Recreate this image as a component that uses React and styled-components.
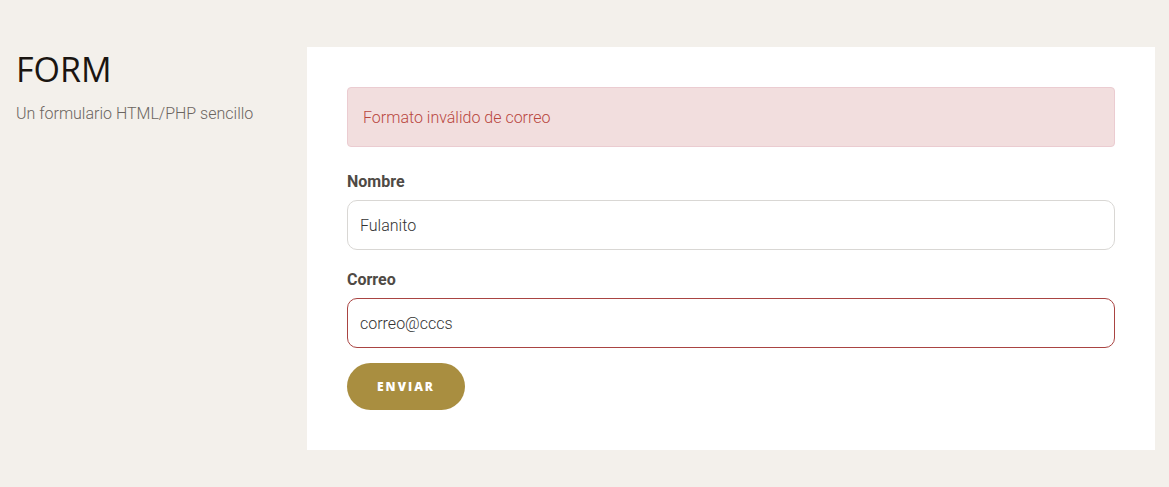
import React from 'react'
import styled, { createGlobalStyle } from 'styled-components'

const GlobalStyle = createGlobalStyle`
  body {
    margin: 0;
    background: #f3f0eb;
    font-family: Roboto, "Liberation Sans", sans-serif;
  }
`

const Page = styled.div`
  display: flex;
  align-items: flex-start;
  padding: 47px 14px 37px 16px;
`

const Intro = styled.div`
  width: 291px;
  flex-shrink: 0;
`

const Title = styled.h1`
  margin: 2px 0 0;
  font-family: "Open Sans", sans-serif;
  font-weight: 400;
  font-size: 34px;
  line-height: 40px;
  color: #1a1511;
`

const Subtitle = styled.p`
  margin: 13px 0 0;
  font-weight: 300;
  font-size: 16px;
  line-height: 24px;
  color: #6b6560;
`

const Card = styled.div`
  flex: 1;
  background: #fff;
  padding: 40px;
`

const Alert = styled.div`
  height: 60px;
  box-sizing: border-box;
  display: flex;
  align-items: center;
  padding: 0 15px;
  background: #f2dede;
  border: 1px solid #ebccd1;
  border-radius: 4px;
  color: #b9473f;
  font-size: 16px;
  font-weight: 300;
`

const Field = styled.div`
  margin-top: ${p => p.first ? '25px' : '20px'};
`

const Label = styled.label`
  display: block;
  font-weight: 700;
  font-size: 16px;
  line-height: 20px;
  color: #4f4a45;
  margin-bottom: 8px;
`

const Input = styled.input`
  display: block;
  width: 100%;
  box-sizing: border-box;
  height: 50px;
  padding: 0 12px;
  border: 1px solid ${p => p.invalid ? '#a94442' : '#d9d7d4'};
  border-radius: 10px;
  font-family: Roboto, sans-serif;
  font-size: 16px;
  font-weight: 300;
  color: #333;
  outline: none;
`

const Button = styled.button`
  display: block;
  margin-top: 15px;
  width: 118px;
  height: 47px;
  border: none;
  border-radius: 24px;
  background: #a98e40;
  color: #fff;
  font-family: "Open Sans", sans-serif;
  font-weight: 800;
  font-size: 12px;
  letter-spacing: 2px;
  cursor: pointer;
`

export default function App() {
  return (
    <>
      <GlobalStyle />
      <Page>
        <Intro>
          <Title>FORM</Title>
          <Subtitle>Un formulario HTML/PHP sencillo</Subtitle>
        </Intro>
        <Card>
          <Alert>Formato inválido de correo</Alert>
          <Field first>
            <Label>Nombre</Label>
            <Input defaultValue="Fulanito" />
          </Field>
          <Field>
            <Label>Correo</Label>
            <Input invalid defaultValue="correo@cccs" />
          </Field>
          <Button>ENVIAR</Button>
        </Card>
      </Page>
    </>
  )
}
